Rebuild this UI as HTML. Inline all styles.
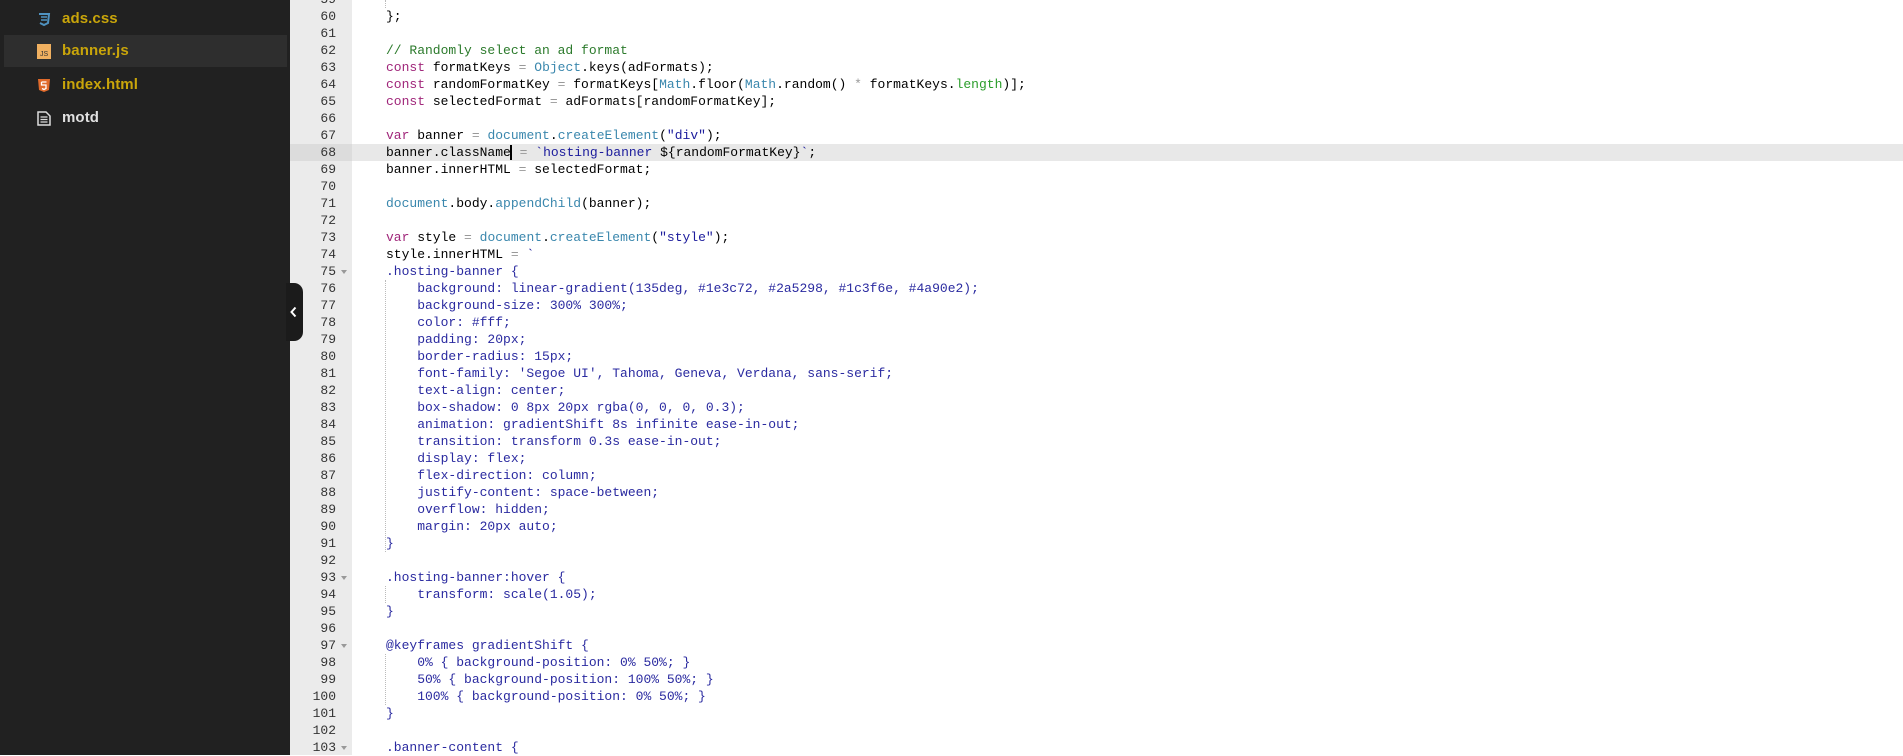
<!DOCTYPE html>
<html><head><meta charset="utf-8"><style>
*{margin:0;padding:0;box-sizing:border-box}
body{width:1903px;height:755px;overflow:hidden;background:#fff;position:relative;font-family:"Liberation Sans",sans-serif}
#side{position:absolute;left:0;top:0;width:290px;height:755px;background:#212121;z-index:2}
.f{position:absolute;left:0;width:283px;height:32px;}
.f.sel{left:4px;background:#2e2e2e}
.f span{position:absolute;left:62px;top:7px;font-size:15px;font-weight:bold;color:#c9a50a;letter-spacing:0.1px}
.ic{position:absolute;left:37px;top:9px;width:14px;height:15px}
#gut{position:absolute;left:290px;top:0;width:62px;height:755px;background:#ebebeb}
.l{position:absolute;left:290px;width:1613px;height:17px;font-family:"Liberation Mono",monospace;font-size:13px;line-height:17px;white-space:pre;color:#000}
.n{position:absolute;left:0;width:46px;text-align:right;color:#333}
.c{position:absolute;left:96px}
.act{background:#e8e8e8}
.act .n{background:#dcdcdc;width:62px;padding-right:16px}
.k{color:#a0267a}.cm{color:#2b7a2b}.o{color:#999}.t{color:#3a87ad}.g{color:#2a9d2a}.s{color:#1b1b9c}.b{color:#2a2aa0}
.fold{position:absolute;left:341px;width:0;height:0;border-left:3px solid transparent;border-right:3px solid transparent;border-top:4px solid #999}
#tab{position:absolute;left:286px;top:283px;width:17px;height:58px;background:#1b1b1b;border-radius:0 9px 9px 0;z-index:3}
.guide{position:absolute;left:385px;width:0;border-left:1px dotted #bbb}
</style></head><body>
<div id="side">
 <div class="f" style="top:3px"><svg class="ic" viewBox="0 0 14 15"><path d="M2 2h10l-1 9-4 2-4-2" fill="none" stroke="#4f92c0" stroke-width="2"/><path d="M4 5h6M4 8h6" stroke="#4f92c0" stroke-width="1.5"/></svg><span>ads.css</span></div>
 <div class="f sel" style="top:35px"><svg class="ic" style="left:33px" viewBox="0 0 14 15"><rect width="14" height="15" fill="#f0b060"/><text x="3" y="12" font-size="7" fill="#333" font-family="Liberation Sans">JS</text></svg><span style="left:58px">banner.js</span></div>
 <div class="f" style="top:69px"><svg class="ic" viewBox="0 0 14 15"><path d="M1 1h12l-1 11-5 2-5-2z" fill="#e06a2b"/><path d="M4.5 4h5M4.5 4v3h4.5v3.5l-2 1-2-1" fill="none" stroke="#fff" stroke-width="1.3"/></svg><span>index.html</span></div>
 <div class="f" style="top:102px"><svg class="ic" viewBox="0 0 14 15"><path d="M1 1h8l4 4v9H1z" fill="none" stroke="#ddd" stroke-width="1.5"/><path d="M3.5 6h7M3.5 8.5h7M3.5 11h7" stroke="#ddd" stroke-width="1.2"/></svg><span style="color:#e0e0e0">motd</span></div>
</div>
<div id="gut"></div>
<div class="guide" style="top:0;height:8px"></div>
<div class="guide" style="top:280px;height:272px"></div>
<div class="guide" style="top:586px;height:17px"></div>
<div class="guide" style="top:654px;height:51px"></div>
<div id="tab"><svg width="17" height="58" viewBox="0 0 17 58"><path d="M9.5 24.5l-4 4.5 4 4.5" fill="none" stroke="#fff" stroke-width="2"/></svg></div>
<div class="l" style="top:-9px"><span class="n">59</span></div>
<div class="l" style="top:8px"><span class="n">60</span><span class="c">};</span></div>
<div class="l" style="top:25px"><span class="n">61</span></div>
<div class="l" style="top:42px"><span class="n">62</span><span class="c cm">// Randomly select an ad format</span></div>
<div class="l" style="top:59px"><span class="n">63</span><span class="c"><span class="k">const</span> formatKeys <span class="o">=</span> <span class="t">Object</span>.keys(adFormats);</span></div>
<div class="l" style="top:76px"><span class="n">64</span><span class="c"><span class="k">const</span> randomFormatKey <span class="o">=</span> formatKeys[<span class="t">Math</span>.floor(<span class="t">Math</span>.random() <span class="o">*</span> formatKeys.<span class="g">length</span>)];</span></div>
<div class="l" style="top:93px"><span class="n">65</span><span class="c"><span class="k">const</span> selectedFormat <span class="o">=</span> adFormats[randomFormatKey];</span></div>
<div class="l" style="top:110px"><span class="n">66</span></div>
<div class="l" style="top:127px"><span class="n">67</span><span class="c"><span class="k">var</span> banner <span class="o">=</span> <span class="t">document</span>.<span class="t">createElement</span>(<span class="s">"div"</span>);</span></div>
<div class="l act" style="top:144px"><span class="n">68</span><span class="c">banner.className<span style="border-left:2px solid #000;margin-left:-1px"></span> <span class="o">=</span> <span class="s">`hosting-banner </span>${randomFormatKey}<span class="s">`</span>;</span></div>
<div class="l" style="top:161px"><span class="n">69</span><span class="c">banner.innerHTML <span class="o">=</span> selectedFormat;</span></div>
<div class="l" style="top:178px"><span class="n">70</span></div>
<div class="l" style="top:195px"><span class="n">71</span><span class="c"><span class="t">document</span>.body.<span class="t">appendChild</span>(banner);</span></div>
<div class="l" style="top:212px"><span class="n">72</span></div>
<div class="l" style="top:229px"><span class="n">73</span><span class="c"><span class="k">var</span> style <span class="o">=</span> <span class="t">document</span>.<span class="t">createElement</span>(<span class="s">"style"</span>);</span></div>
<div class="l" style="top:246px"><span class="n">74</span><span class="c">style.innerHTML <span class="o">=</span> <span class="s">`</span></span></div>
<div class="l" style="top:263px"><span class="n">75</span><span class="c b">.hosting-banner {</span></div>
<div class="l" style="top:280px"><span class="n">76</span><span class="c b">    background: linear-gradient(135deg, #1e3c72, #2a5298, #1c3f6e, #4a90e2);</span></div>
<div class="l" style="top:297px"><span class="n">77</span><span class="c b">    background-size: 300% 300%;</span></div>
<div class="l" style="top:314px"><span class="n">78</span><span class="c b">    color: #fff;</span></div>
<div class="l" style="top:331px"><span class="n">79</span><span class="c b">    padding: 20px;</span></div>
<div class="l" style="top:348px"><span class="n">80</span><span class="c b">    border-radius: 15px;</span></div>
<div class="l" style="top:365px"><span class="n">81</span><span class="c b">    font-family: 'Segoe UI', Tahoma, Geneva, Verdana, sans-serif;</span></div>
<div class="l" style="top:382px"><span class="n">82</span><span class="c b">    text-align: center;</span></div>
<div class="l" style="top:399px"><span class="n">83</span><span class="c b">    box-shadow: 0 8px 20px rgba(0, 0, 0, 0.3);</span></div>
<div class="l" style="top:416px"><span class="n">84</span><span class="c b">    animation: gradientShift 8s infinite ease-in-out;</span></div>
<div class="l" style="top:433px"><span class="n">85</span><span class="c b">    transition: transform 0.3s ease-in-out;</span></div>
<div class="l" style="top:450px"><span class="n">86</span><span class="c b">    display: flex;</span></div>
<div class="l" style="top:467px"><span class="n">87</span><span class="c b">    flex-direction: column;</span></div>
<div class="l" style="top:484px"><span class="n">88</span><span class="c b">    justify-content: space-between;</span></div>
<div class="l" style="top:501px"><span class="n">89</span><span class="c b">    overflow: hidden;</span></div>
<div class="l" style="top:518px"><span class="n">90</span><span class="c b">    margin: 20px auto;</span></div>
<div class="l" style="top:535px"><span class="n">91</span><span class="c b">}</span></div>
<div class="l" style="top:552px"><span class="n">92</span></div>
<div class="l" style="top:569px"><span class="n">93</span><span class="c b">.hosting-banner:hover {</span></div>
<div class="l" style="top:586px"><span class="n">94</span><span class="c b">    transform: scale(1.05);</span></div>
<div class="l" style="top:603px"><span class="n">95</span><span class="c b">}</span></div>
<div class="l" style="top:620px"><span class="n">96</span></div>
<div class="l" style="top:637px"><span class="n">97</span><span class="c b">@keyframes gradientShift {</span></div>
<div class="l" style="top:654px"><span class="n">98</span><span class="c b">    0% { background-position: 0% 50%; }</span></div>
<div class="l" style="top:671px"><span class="n">99</span><span class="c b">    50% { background-position: 100% 50%; }</span></div>
<div class="l" style="top:688px"><span class="n">100</span><span class="c b">    100% { background-position: 0% 50%; }</span></div>
<div class="l" style="top:705px"><span class="n">101</span><span class="c b">}</span></div>
<div class="l" style="top:722px"><span class="n">102</span></div>
<div class="l" style="top:739px"><span class="n">103</span><span class="c b">.banner-content {</span></div>
<div class="fold" style="top:270px"></div>
<div class="fold" style="top:576px"></div>
<div class="fold" style="top:644px"></div>
<div class="fold" style="top:746px"></div>
</body></html>
